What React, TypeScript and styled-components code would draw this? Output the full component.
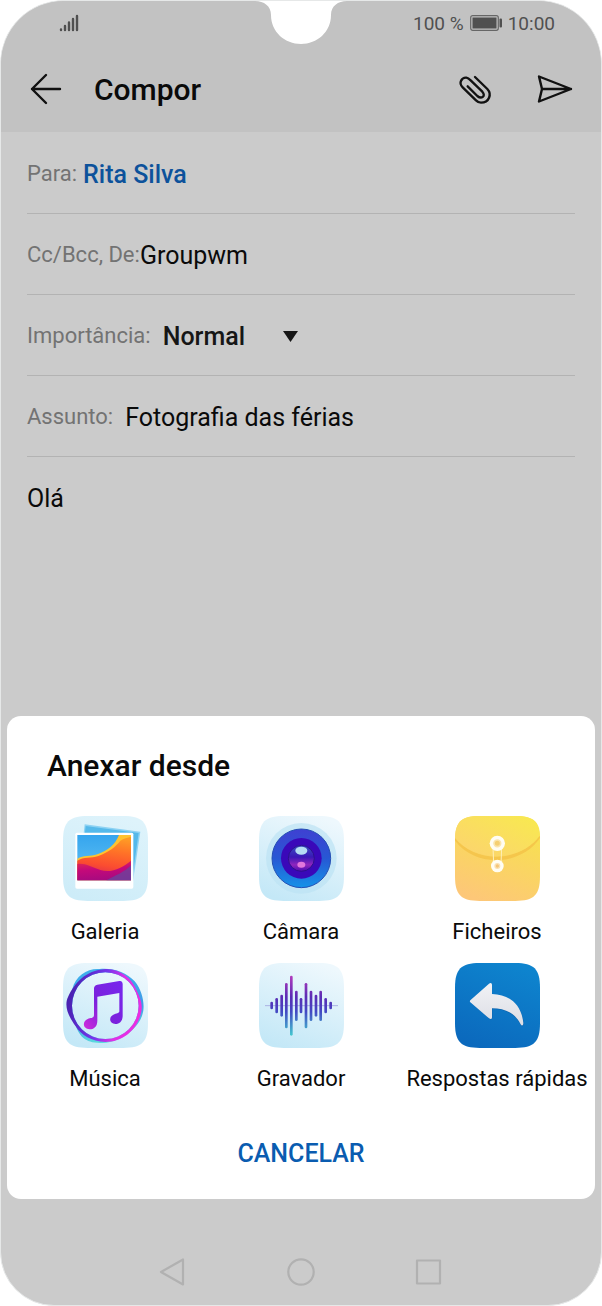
import React from 'react';
import styled, { createGlobalStyle } from 'styled-components';

const GlobalStyle = createGlobalStyle`
  *, *::before, *::after { box-sizing: border-box; }
  body {
    margin: 0;
    background: #fff;
    font-family: Roboto, "Liberation Sans", sans-serif;
    color: #0a0a0a;
  }
  svg { display: block; flex: none; }
`;

const Screen = styled.div`
  position: relative;
  display: flex;
  flex-direction: column;
  min-height: 100vh;
  border: 1px solid #e6e8e8;
  border-radius: 64px 64px 54px 54px;
  background: #cbcbcb;
  overflow: hidden;
`;

const Notch = styled.svg`
  position: absolute;
  top: -1px;
  left: 50%;
  margin-left: -46px;
`;

const Top = styled.header`
  background: #c2c2c2;
`;

const StatusBar = styled.div`
  display: flex;
  align-items: center;
  justify-content: space-between;
  height: 44px;
  padding: 0 46px 0 58px;
  color: #505050;
  font-size: 19px;
`;

const StatusGroup = styled.div`
  display: flex;
  align-items: center;
  gap: 6px;
`;

const AppBar = styled.div`
  display: flex;
  align-items: center;
  height: 87px;
  padding: 0 26px 0 25px;
`;

const Title = styled.h1`
  flex: 1;
  margin: 0 0 0 28px;
  padding-top: 2px;
  font-size: 30px;
  line-height: 36px;
  font-weight: 500;
`;

const IconButton = styled.button`
  display: flex;
  align-items: center;
  justify-content: center;
  width: 40px;
  height: 40px;
  padding: 0;
  border: 0;
  background: none;
  color: #111;
  cursor: pointer;
`;

const AppActions = styled.div`
  display: flex;
  gap: 40px;
`;

const Form = styled.form`
  flex: 1;
  display: flex;
  flex-direction: column;
  padding: 1px 26px 0;
`;

const Field = styled.div<{ $gap: number }>`
  display: flex;
  align-items: center;
  gap: ${(p) => p.$gap}px;
  height: 81px;
  padding-top: 2px;
  border-bottom: 1px solid #b3b3b3;
`;

const Label = styled.label`
  flex: none;
  color: #737373;
  font-size: 22px;
  line-height: 30px;
`;

const TextInput = styled.input<{ $recipient?: boolean }>`
  flex: 1;
  min-width: 0;
  height: 40px;
  padding: 0;
  border: 0;
  outline: 0;
  background: none;
  color: ${(p) => (p.$recipient ? '#0d529b' : '#0a0a0a')};
  font: ${(p) => (p.$recipient ? 500 : 400)} 25px Roboto, sans-serif;
`;

const SelectWrap = styled.div`
  display: grid;
  align-items: center;
  width: 135px;

  > * { grid-area: 1 / 1; }
  > svg { justify-self: end; pointer-events: none; }
`;

const Select = styled.select`
  width: 100%;
  height: 40px;
  padding: 0;
  border: 0;
  outline: 0;
  appearance: none;
  background: none;
  color: #161616;
  font: 500 25px Roboto, sans-serif;
`;

const Message = styled.textarea`
  flex: 1;
  min-height: 180px;
  padding: 27px 0;
  border: 0;
  outline: 0;
  resize: none;
  background: none;
  color: #0a0a0a;
  font: 400 25px/30px Roboto, sans-serif;
`;

const Sheet = styled.section`
  margin: 0 6px;
  padding: 32px 0 22px;
  border-radius: 14px;
  background: #fff;
`;

const SheetTitle = styled.h2`
  margin: 0 40px 32px;
  font-size: 30px;
  line-height: 36px;
  font-weight: 500;
`;

const Grid = styled.div`
  display: grid;
  grid-template-columns: repeat(3, 1fr);
  row-gap: 16px;
`;

const Source = styled.button`
  display: flex;
  flex-direction: column;
  align-items: center;
  gap: 16px;
  padding: 0;
  border: 0;
  background: none;
  color: #0a0a0a;
  font: 400 22px/30px Roboto, sans-serif;
  white-space: nowrap;
  cursor: pointer;
`;

const Cancel = styled.button`
  display: block;
  height: 48px;
  margin: 35px auto 0;
  padding: 0 16px;
  border: 0;
  background: none;
  color: #0a5cb0;
  font: 500 25px Roboto, sans-serif;
  cursor: pointer;
`;

const NavBar = styled.nav`
  display: flex;
  align-items: center;
  justify-content: center;
  gap: 88px;
  height: 106px;
  padding-top: 40px;

  > button { color: #b1b1b1; }
`;

const Tile = ({ id, from = '#eef8fd', to = '#c4e8f7', children }: {
  id: string; from?: string; to?: string; children: React.ReactNode;
}) => (
  <svg width="85" height="85" viewBox="0 0 255 255" aria-hidden="true">
    <defs>
      <linearGradient id={id} x1="0.7" y1="0" x2="0.3" y2="1">
        <stop offset="0" stopColor={from} />
        <stop offset="1" stopColor={to} />
      </linearGradient>
    </defs>
    <path d="M0 74C0 18 18 0 74 0H181C237 0 255 18 255 74V181C255 237 237 255 181 255H74C18 255 0 237 0 181Z" fill={`url(#${id})`} />
    {children}
  </svg>
);

const GalleryIcon = () => (
  <Tile id="tileGallery" from="#def3fb" to="#cdecf8">
    <defs>
      <linearGradient id="galSky" x1="0" y1="0" x2="0" y2="1">
        <stop offset="0" stopColor="#35a5ee" /><stop offset="1" stopColor="#66c4f3" />
      </linearGradient>
      <linearGradient id="galHill" x1="0.6" y1="0" x2="0.4" y2="1">
        <stop offset="0" stopColor="#ff9a25" /><stop offset="0.3" stopColor="#ff7327" /><stop offset="0.65" stopColor="#fb4d30" /><stop offset="1" stopColor="#d4205c" />
      </linearGradient>
      <linearGradient id="galBase" x1="0.3" y1="0" x2="0.5" y2="1">
        <stop offset="0" stopColor="#e02a52" /><stop offset="0.45" stopColor="#c4097a" /><stop offset="1" stopColor="#a50a80" />
      </linearGradient>
    </defs>
    <path d="M65 25L232 47L210 196L50 160Z" fill="#8dd2f3" />
    <path d="M68 30L227 51L207 190L55 150Z" fill="#55b9ea" />
    <rect x="37" y="50" width="174" height="168" rx="5" fill="#fff" />
    <rect x="43" y="57" width="161" height="136" fill="url(#galSky)" />
    <path d="M43 128C62 117 82 122 103 115C135 103 157 85 168 57H204V193H43Z" fill="#ffc32f" />
    <path d="M43 134C62 122 84 127 106 120C138 108 158 92 172 74C182 66 194 66 204 62V193H43Z" fill="url(#galHill)" />
    <path d="M43 144C65 141 89 154 112 162C145 172 178 156 204 134V193H43Z" fill="url(#galBase)" />
    <path d="M130 193C158 178 185 168 204 148V193Z" fill="#67479f" opacity="0.75" />
  </Tile>
);

const CameraIcon = () => (
  <Tile id="tileCamera">
    <defs>
      <linearGradient id="camRing" x1="0.5" y1="0" x2="0.5" y2="1">
        <stop offset="0" stopColor="#3f40d2" /><stop offset="0.5" stopColor="#2758d4" /><stop offset="1" stopColor="#1592e8" />
      </linearGradient>
      <linearGradient id="camLens" x1="0.5" y1="0" x2="0.5" y2="1">
        <stop offset="0" stopColor="#3a50c2" /><stop offset="0.45" stopColor="#3a17b6" /><stop offset="0.75" stopColor="#9026bd" /><stop offset="1" stopColor="#4a0bb1" />
      </linearGradient>
    </defs>
    <circle cx="127" cy="127" r="106" fill="#bce3f3" opacity="0.7" />
    <circle cx="127" cy="127" r="88" fill="url(#camRing)" stroke="#2450b4" strokeWidth="3" />
    <circle cx="127" cy="127" r="61" fill="#3a08b9" />
    <circle cx="127" cy="127" r="39" fill="url(#camLens)" stroke="#2c108d" strokeWidth="3" />
    <ellipse cx="127" cy="104" rx="18" ry="12" fill="#b4dcf3" />
    <ellipse cx="127" cy="146" rx="12" ry="9" fill="#e277dc" />
  </Tile>
);

const FilesIcon = () => (
  <Tile id="tileFiles" from="#f7e34c" to="#fdc778">
    <defs>
      <linearGradient id="flap" x1="1" y1="0" x2="0" y2="1">
        <stop offset="0" stopColor="#f8ea4e" /><stop offset="1" stopColor="#fcd271" />
      </linearGradient>
    </defs>
    <path d="M0 65C60 142 195 142 255 58V66C195 153 60 153 0 74Z" fill="#f4c247" opacity="0.8" />
    <path d="M0 65C2 16 20 0 74 0H181C235 0 253 16 255 58C195 140 60 140 0 65Z" fill="url(#flap)" />
    <path d="M114 92L116 146M140 92L138 146" stroke="#fff0b8" strokeWidth="3" />
    <circle cx="127" cy="82" r="23" fill="#fffdf3" />
    <circle cx="127" cy="82" r="10" fill="#f5cf72" stroke="#fae5ad" strokeWidth="5" />
    <circle cx="127" cy="150" r="19" fill="#fffdf3" />
    <circle cx="127" cy="150" r="7" fill="#f5c577" stroke="#fae1b2" strokeWidth="4" />
  </Tile>
);

const MusicIcon = () => (
  <Tile id="tileMusic">
    <defs>
      <linearGradient id="musRing" x1="0" y1="0.4" x2="1" y2="0.6">
        <stop offset="0" stopColor="#4620ad" /><stop offset="0.45" stopColor="#7436ed" /><stop offset="0.7" stopColor="#df31e8" /><stop offset="1" stopColor="#ed2ce2" />
      </linearGradient>
      <linearGradient id="musBlue" x1="0.3" y1="0" x2="0.5" y2="1">
        <stop offset="0" stopColor="#3fb0ec" /><stop offset="0.6" stopColor="#3f9be8" /><stop offset="1" stopColor="#5fe0dc" />
      </linearGradient>
      <linearGradient id="musNote" x1="1" y1="0" x2="0" y2="1">
        <stop offset="0" stopColor="#7727ee" /><stop offset="0.55" stopColor="#7b21dc" /><stop offset="1" stopColor="#d12bdc" />
      </linearGradient>
    </defs>
    <path fillRule="evenodd" d="M28 78C38 36 75 15 110 18C150 14 190 28 215 55C240 85 247 130 238 155C225 200 170 236 130 239C95 243 75 236 62 226C30 200 18 118 28 78ZM127 28A100 100 0 1 0 127 228A100 100 0 1 0 127 28Z" fill="url(#musBlue)" />
    <path fillRule="evenodd" d="M127 18C172 16 206 46 220 80C230 102 241 122 234 150C223 200 180 237 127 237C85 236 55 216 38 190C15 158 2 128 16 100C34 62 66 22 127 18ZM127 28A100 100 0 1 0 127 228A100 100 0 1 0 127 28Z" fill="url(#musRing)" />
    <path d="M93 77C93 70 96 67 103 65L169 54C176 53 179 57 179 64V158C179 176 168 183 158 183C139 183 136 162 151 155C160 151 169 151 169 145V90L103 101V173C103 191 92 199 80 199C59 198 57 176 74 168C84 164 93 166 93 156Z" fill="url(#musNote)" />
  </Tile>
);

const bars: [number, number, number][] = [
  [38, 118, 137], [53, 107, 149], [68, 97, 159], [82, 62, 194], [97, 40, 216],
  [112, 85, 172], [126, 107, 149], [141, 62, 194], [156, 85, 172], [171, 97, 159],
  [185, 85, 172], [200, 107, 149], [215, 118, 137],
];

const RecorderIcon = () => (
  <Tile id="tileRecorder">
    <defs>
      <linearGradient id="wave" gradientUnits="userSpaceOnUse" x1="0" y1="38" x2="0" y2="218">
        <stop offset="0" stopColor="#b23bbd" /><stop offset="0.35" stopColor="#5b2cb4" /><stop offset="0.6" stopColor="#4348c3" /><stop offset="1" stopColor="#43c9cf" />
      </linearGradient>
    </defs>
    <path d="M18 128H237" stroke="#aab1e4" strokeWidth="3" />
    {bars.map(([x, y1, y2]) => (
      <rect key={x} x={x - 4} y={y1 - 2} width="8" height={y2 - y1 + 4} rx="4" fill="url(#wave)" />
    ))}
  </Tile>
);

const ReplyIcon = () => (
  <Tile id="tileReply" from="#0e84ce" to="#0b69bd">
    <defs>
      <linearGradient id="replyArrow" x1="0" y1="0" x2="0" y2="1">
        <stop offset="0" stopColor="#f1f2f6" /><stop offset="1" stopColor="#dcdde4" />
      </linearGradient>
    </defs>
    <path d="M48 119L103 167C108 171 112 169 112 163V138C151 137 180 154 197 185C201 193 206 190 206 181C202 130 166 97 112 97Z" fill="#064f98" opacity="0.5" />
    <path d="M46 112L102 62C107 58 111 60 111 66V93C165 94 200 127 205 180C205 189 200 190 196 182C180 151 151 136 111 136V162C111 169 107 170 102 166L46 118C44 116 44 114 46 112Z" fill="url(#replyArrow)" />
  </Tile>
);

const sources = [
  { name: 'Galeria', Icon: GalleryIcon },
  { name: 'Câmara', Icon: CameraIcon },
  { name: 'Ficheiros', Icon: FilesIcon },
  { name: 'Música', Icon: MusicIcon },
  { name: 'Gravador', Icon: RecorderIcon },
  { name: 'Respostas rápidas', Icon: ReplyIcon },
];

export default function App() {
  return (
    <>
      <GlobalStyle />
      <Screen>
        <Top>
          <StatusBar>
            <svg width="20" height="18" viewBox="0 0 20 18" stroke="#505050" strokeWidth="2.4" strokeLinecap="round" aria-hidden="true">
              <path d="M2 15.5V16M6 12V16M10 8.500V16M14 5V16M18 2V16" />
            </svg>
            <StatusGroup>
              <span>100 %</span>
              <svg width="32" height="16" viewBox="0 0 32 16" aria-hidden="true">
                <rect x="0.700" y="0.700" width="27.600" height="14.600" rx="2" fill="none" stroke="#666" strokeWidth="1.200" />
                <rect x="2.500" y="2.500" width="24" height="11" fill="#505050" />
                <rect x="29.500" y="3.500" width="2.500" height="9" rx="1" fill="#505050" />
              </svg>
              <span>10:00</span>
            </StatusGroup>
          </StatusBar>
          <AppBar>
            <IconButton type="button" aria-label="Voltar">
              <svg width="32" height="32" viewBox="0 0 32 32" fill="none" stroke="currentColor" strokeWidth="2.400" strokeLinecap="round" strokeLinejoin="round">
                <path d="M30 16H2M16 2L2 16L16 30" />
              </svg>
            </IconButton>
            <Title>Compor</Title>
            <AppActions>
              <IconButton type="button" aria-label="Anexar">
                <svg width="40" height="40" viewBox="0 0 120 120" fill="none" stroke="currentColor" strokeWidth="7" strokeLinecap="round" strokeLinejoin="round">
                  <path d="M60 24L97 60C111 75 103 101 78 101C71 101 67 98 63 94L23 55C9 41 21 25 34 26C40 27 43 30 47 34L82 68C94 82 79 91 67 81L38 52" />
                </svg>
              </IconButton>
              <IconButton type="button" aria-label="Enviar">
                <svg width="36" height="30" viewBox="0 0 36 30" fill="none" stroke="currentColor" strokeWidth="2.400" strokeLinecap="round" strokeLinejoin="round">
                  <path d="M2 2.500L34 15L2 27.500L5 15ZM5 15H34" />
                </svg>
              </IconButton>
            </AppActions>
          </AppBar>
        </Top>

        <Form onSubmit={(e) => e.preventDefault()}>
          <Field $gap={6}>
            <Label htmlFor="to">Para:</Label>
            <TextInput id="to" $recipient defaultValue="Rita Silva" />
          </Field>
          <Field $gap={0}>
            <Label htmlFor="from">Cc/Bcc, De:</Label>
            <TextInput id="from" defaultValue="Groupwm" />
          </Field>
          <Field $gap={12}>
            <Label htmlFor="importance">Importância:</Label>
            <SelectWrap>
              <Select id="importance" defaultValue="Normal">
                <option>Normal</option>
              </Select>
              <svg width="15" height="11" viewBox="0 0 15 11" aria-hidden="true">
                <path d="M0 0H15L7.500 11Z" fill="#161616" />
              </svg>
            </SelectWrap>
          </Field>
          <Field $gap={12}>
            <Label htmlFor="subject">Assunto:</Label>
            <TextInput id="subject" defaultValue="Fotografia das férias" />
          </Field>
          <Message aria-label="Mensagem" defaultValue="Olá" />
        </Form>

        <Sheet role="dialog" aria-labelledby="sheet-title">
          <SheetTitle id="sheet-title">Anexar desde</SheetTitle>
          <Grid>
            {sources.map(({ name, Icon }) => (
              <Source key={name} type="button">
                <Icon />
                {name}
              </Source>
            ))}
          </Grid>
          <Cancel type="button">CANCELAR</Cancel>
        </Sheet>

        <NavBar>
          <IconButton type="button" aria-label="Retroceder">
            <svg width="28" height="32" viewBox="0 0 28 32" fill="none" stroke="currentColor" strokeWidth="2.200" strokeLinejoin="round">
              <path d="M24 3.500V28.500L2 16Z" />
            </svg>
          </IconButton>
          <IconButton type="button" aria-label="Início">
            <svg width="28" height="32" viewBox="0 0 28 32" fill="none" stroke="currentColor" strokeWidth="2.200">
              <circle cx="14" cy="16" r="12.700" />
            </svg>
          </IconButton>
          <IconButton type="button" aria-label="Recentes">
            <svg width="28" height="32" viewBox="0 0 28 32" fill="none" stroke="currentColor" strokeWidth="2.200" strokeLinejoin="round">
              <rect x="2" y="4.500" width="23" height="23" />
            </svg>
          </IconButton>
        </NavBar>
        <Notch width="92" height="45" viewBox="0 0 92 45" aria-hidden="true">
          <path d="M0 0V1C9 1 16 6 16 15C16 32 30 44 46 44C62 44 76 32 76 15C76 6 83 1 92 1V0Z" fill="#fff" />
        </Notch>
      </Screen>
    </>
  );
}
